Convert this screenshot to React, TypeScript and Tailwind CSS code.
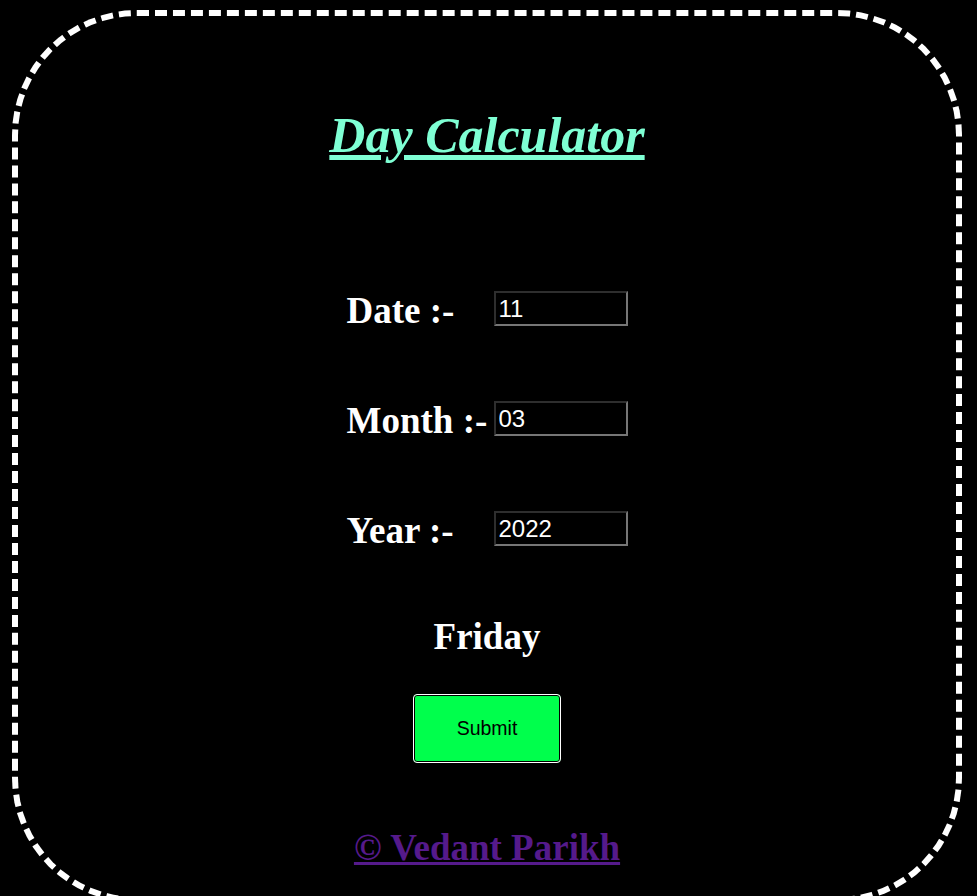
import React from "react";

export default function App() {
  const serif = { fontFamily: '"Liberation Serif", "Times New Roman", serif' };
  const rows: [string, string][] = [
    ["Date :-", "11"],
    ["Month :-", "03"],
    ["Year :-", "2022"],
  ];
  return (
    <div className="min-h-screen bg-black pt-[10px] pb-[10px] pl-[12px] pr-[15px]" style={serif}>
      <div className="border-[6px] border-dashed border-white rounded-[125px] h-[893px] flex flex-col items-center pt-[92px] font-['Liberation_Serif',serif]">
        <h1 className="text-[50px] leading-[55px] font-bold italic underline text-[#7fffd4] font-['Liberation_Serif',serif]">
          Day Calculator
        </h1>
        <div className="mt-[127px] flex flex-col gap-[69px]">
          {rows.map(([label, value]) => (
            <div key={label} className="grid grid-cols-[147px_134px] items-start h-[41px]">
              <span className="text-[37px] leading-[41px] font-bold text-white font-['Liberation_Serif',serif] whitespace-nowrap">
                {label}
              </span>
              <input
                defaultValue={value}
                className="mt-[1px] w-[134px] h-[35px] bg-black text-white text-[24px] pl-[3px] border-2 border-t-[#2e2e2e] border-l-[#2e2e2e] border-b-[#767676] border-r-[#767676] outline-none font-['Liberation_Sans',Arial,sans-serif]"
              />
            </div>
          ))}
        </div>
        <div className="mt-[65px] text-[37px] leading-[41px] font-bold text-white font-['Liberation_Serif',serif]">
          Friday
        </div>
        <button className="mt-[37px] w-[148px] h-[69px] bg-[#00ff4c] border border-white rounded-[4px] shadow-[inset_0_0_0_1px_#000] text-[19.5px] text-black font-['Liberation_Sans',Arial,sans-serif]">
          Submit
        </button>
        <a
          href="#"
          className="mt-[64px] text-[37px] leading-[41px] font-bold underline text-[#551a8b] font-['Liberation_Serif',serif]"
        >
          © Vedant Parikh
        </a>
      </div>
    </div>
  );
}
